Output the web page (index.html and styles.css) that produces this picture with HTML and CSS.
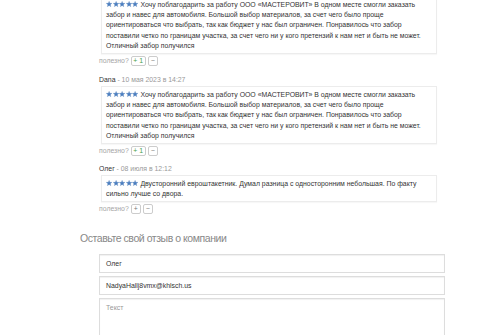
FILE: index.html
```html
<!DOCTYPE html>
<html>
<head>
<meta charset="utf-8">
<link rel="stylesheet" href="styles.css">
</head>
<body>
<svg width="0" height="0" class="defs">
  <defs>
    <symbol id="star" viewBox="0 0 10 10">
      <polygon points="5,0.3 6.2,3.6 9.7,3.7 7,5.9 7.9,9.4 5,7.4 2.1,9.4 3,5.9 0.3,3.7 3.8,3.6"/>
    </symbol>
  </defs>
</svg>
<div class="page">
  <div class="reviews">
    <div class="review first">
      <div class="box"><span class="stars"><svg><use href="#star"/></svg><svg><use href="#star"/></svg><svg><use href="#star"/></svg><svg><use href="#star"/></svg><svg><use href="#star"/></svg></span> Хочу поблагодарить за работу ООО «МАСТЕРОВИТ» В одном месте смогли заказать забор и навес для автомобиля. Большой выбор материалов, за счет чего было проще ориентироваться что выбрать, так как бюджет у нас был ограничен. Понравилось что забор поставили четко по границам участка, за счет чего ни у кого претензий к нам нет и быть не может. Отличный забор получился</div>
      <div class="useful">полезно? <span class="vote plus">+ 1</span><span class="vote">−</span></div>
    </div>
    <div class="review">
      <div class="author">Dana <span class="date">- 10 мая 2023 в 14:27</span></div>
      <div class="box"><span class="stars"><svg><use href="#star"/></svg><svg><use href="#star"/></svg><svg><use href="#star"/></svg><svg><use href="#star"/></svg><svg><use href="#star"/></svg></span> Хочу поблагодарить за работу ООО «МАСТЕРОВИТ» В одном месте смогли заказать забор и навес для автомобиля. Большой выбор материалов, за счет чего было проще ориентироваться что выбрать, так как бюджет у нас был ограничен. Понравилось что забор поставили четко по границам участка, за счет чего ни у кого претензий к нам нет и быть не может. Отличный забор получился</div>
      <div class="useful">полезно? <span class="vote plus">+ 1</span><span class="vote">−</span></div>
    </div>
    <div class="review">
      <div class="author">Олег <span class="date">- 08 июля в 12:12</span></div>
      <div class="box"><span class="stars"><svg><use href="#star"/></svg><svg><use href="#star"/></svg><svg><use href="#star"/></svg><svg><use href="#star"/></svg><svg><use href="#star"/></svg></span> Двусторонний евроштакетник. Думал разница с односторонним небольшая. По факту сильно лучше со двора.</div>
      <div class="useful">полезно? <span class="vote">+</span><span class="vote">−</span></div>
    </div>
  </div>
  <h3 class="form-title">Оставьте свой отзыв о компании</h3>
  <form class="form">
    <div class="field">Олег</div>
    <div class="field">NadyaHallj8vmx@khlsch.us</div>
    <div class="field area">Текст</div>
  </form>
</div>
</body>
</html>
```
FILE: styles.css
```css
html, body {
  margin: 0;
  padding: 0;
  background: #fff;
}
body {
  width: 500px;
  height: 335px;
  overflow: hidden;
  font-family: "Liberation Sans", Arial, sans-serif;
  font-size: 6.9px;
  line-height: 10.2px;
  color: #333;
}
.defs {
  display: block;
  width: 0;
  height: 0;
}
.page {
  margin-top: -4px;
}
.reviews {
  margin-left: 99px;
  width: 338px;
}
.review {
  margin-bottom: 8px;
}
.review.first {
  margin-bottom: 9px;
}
.author {
  height: 10px;
  line-height: 10px;
  margin-bottom: 1px;
  font-size: 6.9px;
}
.date {
  color: #999;
}
.box {
  margin-left: 2px;
  border: 1px solid #ececec;
  padding: 3px 4px 2px 4px;
  box-shadow: 0 1px 1px rgba(0,0,0,0.03);
}
.stars {
  display: inline-flex;
  gap: 0.4px;
  vertical-align: -0.5px;
}
.stars svg {
  width: 6.2px;
  height: 6.2px;
  fill: #4b7fc2;
  stroke: #3a6aa8;
  stroke-width: 0.3;
}
.useful {
  display: flex;
  align-items: center;
  gap: 2px;
  color: #a5a5a5;
  margin-top: 2px;
  height: 10px;
  white-space: nowrap;
  font-size: 6.9px;
}
.vote {
  display: inline-flex;
  align-items: center;
  justify-content: center;
  height: 10px;
  min-width: 8px;
  padding: 0 2px;
  box-sizing: border-box;
  border: 1px solid #ccc;
  border-radius: 2px;
  font-size: 6.9px;
  color: #777;
  line-height: 1;
  white-space: nowrap;
}
.vote.plus {
  color: #4aa04a;
  width: 15px;
  padding: 0;
}
.form-title {
  margin: 17px 0 0 80px;
  font-weight: normal;
  font-size: 10.5px;
  letter-spacing: -0.45px;
  color: #888;
  line-height: 14px;
}
.form {
  margin: 9px 0 0 99px;
  width: 346px;
  display: flex;
  flex-direction: column;
  gap: 3px;
}
.field {
  height: 19px;
  box-sizing: border-box;
  border: 1px solid #ddd;
  box-shadow: inset 0 1px 1px rgba(0,0,0,0.06);
  padding: 0 6px;
  display: flex;
  align-items: center;
  font-size: 6.9px;
  color: #333;
}
.field.area {
  height: 60px;
  align-items: flex-start;
  padding-top: 4px;
  color: #999;
}
```
